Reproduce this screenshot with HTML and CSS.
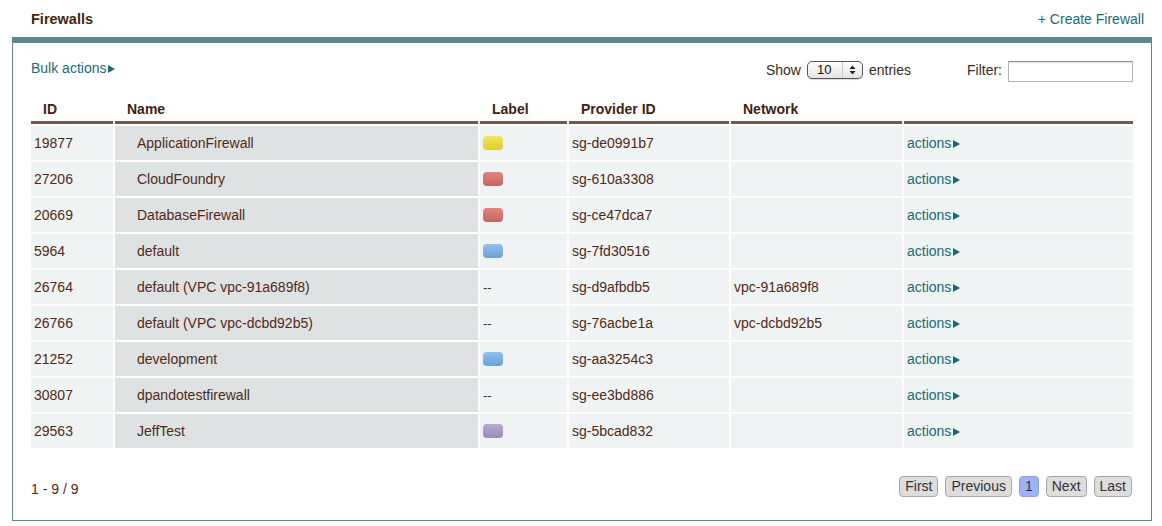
FILE: index.html
```html
<!DOCTYPE html>
<html>
<head>
<meta charset="utf-8">
<title>Firewalls</title>
<link rel="stylesheet" href="styles.css">
</head>
<body>
<div class="topbar">
  <div class="title">Firewalls</div>
  <a class="create">+ Create Firewall</a>
</div>
<div class="panel">
  <div class="toolbar">
    <a class="bulk">Bulk actions<span class="tri"></span></a>
    <div class="controls">
      <span class="lbl">Show</span>
      <div class="select">
        <span class="sel-val">10</span>
        <span class="sel-arrows">
          <svg width="7" height="10" viewBox="0 0 7 10"><path d="M3.5 0.5 L6.5 4 L0.5 4 Z M0.5 6 L6.5 6 L3.5 9.5 Z" fill="#222"/></svg>
        </span>
      </div>
      <span class="lbl">entries</span>
      <span class="lbl filter-lbl">Filter:</span>
      <div class="filter"></div>
    </div>
  </div>
  <div class="table-wrap">
    <table class="grid">
      <colgroup>
        <col class="c-id"><col class="c-name"><col class="c-label"><col class="c-prov"><col class="c-net"><col class="c-act">
      </colgroup>
      <thead>
        <tr><th>ID</th><th>Name</th><th>Label</th><th>Provider ID</th><th>Network</th><th></th></tr>
      </thead>
      <tbody>
        <tr><td>19877</td><td class="name">ApplicationFirewall</td><td><span class="sw yellow"></span></td><td>sg-de0991b7</td><td></td><td><a class="act">actions<span class="tri"></span></a></td></tr>
        <tr><td>27206</td><td class="name">CloudFoundry</td><td><span class="sw red"></span></td><td>sg-610a3308</td><td></td><td><a class="act">actions<span class="tri"></span></a></td></tr>
        <tr><td>20669</td><td class="name">DatabaseFirewall</td><td><span class="sw red"></span></td><td>sg-ce47dca7</td><td></td><td><a class="act">actions<span class="tri"></span></a></td></tr>
        <tr><td>5964</td><td class="name">default</td><td><span class="sw blue"></span></td><td>sg-7fd30516</td><td></td><td><a class="act">actions<span class="tri"></span></a></td></tr>
        <tr><td>26764</td><td class="name">default (VPC vpc-91a689f8)</td><td class="dash">--</td><td>sg-d9afbdb5</td><td>vpc-91a689f8</td><td><a class="act">actions<span class="tri"></span></a></td></tr>
        <tr><td>26766</td><td class="name">default (VPC vpc-dcbd92b5)</td><td class="dash">--</td><td>sg-76acbe1a</td><td>vpc-dcbd92b5</td><td><a class="act">actions<span class="tri"></span></a></td></tr>
        <tr><td>21252</td><td class="name">development</td><td><span class="sw blue"></span></td><td>sg-aa3254c3</td><td></td><td><a class="act">actions<span class="tri"></span></a></td></tr>
        <tr><td>30807</td><td class="name">dpandotestfirewall</td><td class="dash">--</td><td>sg-ee3bd886</td><td></td><td><a class="act">actions<span class="tri"></span></a></td></tr>
        <tr><td>29563</td><td class="name">JeffTest</td><td><span class="sw purple"></span></td><td>sg-5bcad832</td><td></td><td><a class="act">actions<span class="tri"></span></a></td></tr>
      </tbody>
    </table>
  </div>
  <div class="footer">
    <div class="count">1 - 9 / 9</div>
    <div class="pager">
      <span class="pbtn">First</span>
      <span class="pbtn">Previous</span>
      <span class="pbtn current">1</span>
      <span class="pbtn">Next</span>
      <span class="pbtn">Last</span>
    </div>
  </div>
</div>
</body>
</html>
```
FILE: styles.css
```css
html, body {
  margin: 0;
  padding: 0;
  background: #ffffff;
}
body {
  font-family: "Liberation Sans", Arial, Helvetica, sans-serif;
  font-size: 14px;
  line-height: 17px;
  color: #512a16;
  width: 1162px;
}
a {
  color: #1b6a78;
  text-decoration: none;
  cursor: pointer;
}
.topbar {
  height: 37px;
  box-sizing: border-box;
  padding: 11px 18px 0 31px;
  display: flex;
  justify-content: space-between;
  align-items: flex-start;
}
.title {
  font-weight: bold;
  font-size: 14.5px;
  color: #45260f;
}
.panel {
  margin: 0 10px 0 12px;
  border: 1px solid #5e888e;
  border-top: 6px solid #5e888e;
  padding-bottom: 22px;
}
.toolbar {
  display: flex;
  justify-content: space-between;
  align-items: flex-start;
  padding: 0 18px;
  margin-top: 18px;
}
.bulk {
  margin-top: -1px;
  display: flex;
  align-items: center;
}
.tri {
  display: inline-block;
  width: 0;
  height: 0;
  border-left: 7px solid #1b6a78;
  border-top: 4.5px solid transparent;
  border-bottom: 4.5px solid transparent;
  margin-left: 2px;
  margin-top: 1px;
}
.controls {
  display: flex;
  align-items: flex-start;
}
.lbl {
  margin-top: 1px;
  color: #3a2a20;
}
.select {
  margin: 0 6px;
  width: 56px;
  height: 18px;
  box-sizing: border-box;
  border: 1px solid #555;
  border-radius: 5px;
  background: linear-gradient(#ffffff, #e4e4e4);
  display: flex;
  align-items: center;
  box-shadow: 0 1px 1px rgba(0,0,0,0.15);
}
.sel-val {
  flex: 1;
  padding-left: 9px;
  font-size: 13px;
  color: #111;
  line-height: 16px;
}
.sel-arrows {
  width: 19px;
  height: 16px;
  border-left: 1px solid #c8c8c8;
  display: flex;
  align-items: center;
  justify-content: center;
}
.filter-lbl {
  margin-left: 56px;
  margin-right: 6px;
}
.filter {
  width: 125px;
  height: 21px;
  box-sizing: border-box;
  border: 1px solid #b5b5b5;
  border-top-color: #8f8f8f;
  background: #fff;
  box-shadow: inset 0 1px 1px rgba(0,0,0,0.12);
}
.table-wrap {
  padding: 0 18px;
  margin-top: 11px;
}
.grid {
  border-collapse: separate;
  border-spacing: 2px;
  table-layout: fixed;
  width: calc(100% + 4px);
  margin: 0 -2px;
}
.c-id { width: 82px; }
.c-name { width: 363px; }
.c-label { width: 87px; }
.c-prov { width: 160px; }
.c-net { width: 171px; }
.c-act { width: 229px; }
.grid th {
  text-align: left;
  font-weight: bold;
  color: #3f2312;
  padding: 6px 12px 3px;
  border-bottom: 3px solid #6e5a4e;
  white-space: nowrap;
}
.grid td {
  height: 34px;
  padding: 0 3px;
  background: #f0f3f4;
  vertical-align: middle;
  white-space: nowrap;
}
.grid td.name {
  background: #dee2e3;
  padding-left: 22px;
}
.dash {
  font-size: 13px;
}
.sw {
  display: block;
  width: 20px;
  height: 14px;
  border-radius: 4px;
}
.sw.yellow { background: linear-gradient(#f2e660, #dccd2e); }
.sw.red { background: linear-gradient(#e0857d, #c6665f); }
.sw.blue { background: linear-gradient(#92c0ee, #6d9fd6); }
.sw.purple { background: linear-gradient(#b8aad0, #9a8bb7); }
.act {
  display: inline-flex;
  align-items: center;
}
.footer {
  display: flex;
  justify-content: space-between;
  align-items: flex-start;
  padding: 0 18px;
  margin-top: 26px;
}
.count {
  margin-top: 5px;
}
.pager {
  display: flex;
  gap: 7px;
  margin-right: 1px;
}
.pbtn {
  height: 21px;
  box-sizing: border-box;
  line-height: 19px;
  padding: 0 5px;
  border: 1px solid #a6a6a6;
  border-radius: 4px;
  background: #dddddd;
  color: #333;
}
.pbtn.current {
  background: #9db3f6;
  border-color: #8aa0e0;
}
```
